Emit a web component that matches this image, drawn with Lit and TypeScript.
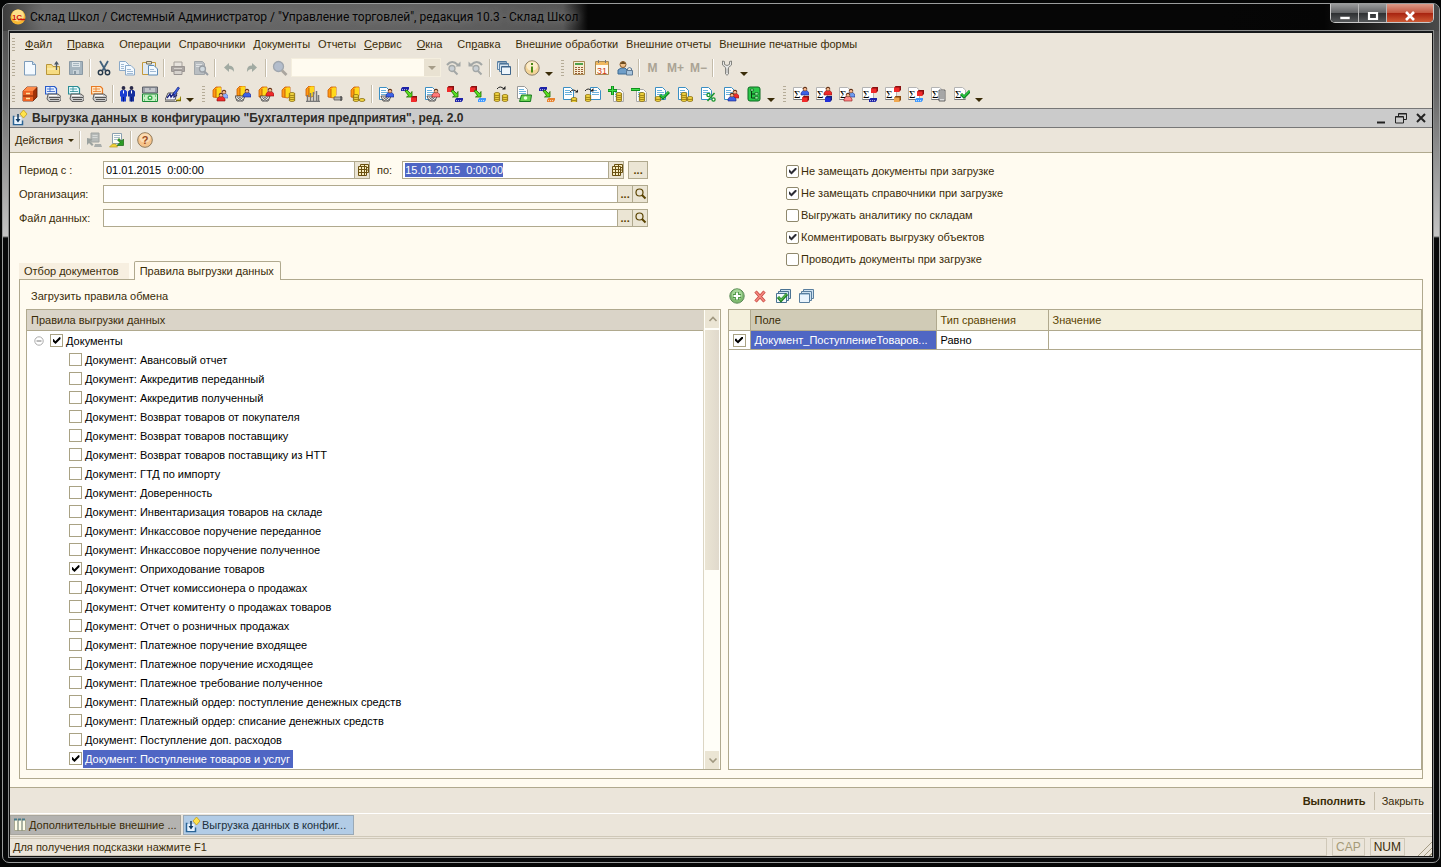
import { LitElement, html, svg, css, nothing } from "lit";
import { customElement, property, state } from "lit/decorators.js";
import { classMap } from "lit/directives/class-map.js";

/* ---------- building blocks shared by the toolbar icons ---------- */

const sheet = (x = 1, y = 1, line = "#3a8fc4") => svg`
  <path d="M${x + 0.5} ${y + 0.5}h7l3 3v9h-10z" fill="#fff" stroke=${line}/>
  <path d="M${x + 2} ${y + 3.5}h5M${x + 2} ${y + 5.5}h7M${x + 2} ${y + 7.5}h7" stroke="#6cb2dc"/>`;

const person = (x: number, y: number, color: string, dark: string) => svg`
  <path d="M${x} ${y + 8}v-2l2-2.500h4l2 2.500v2z" fill=${color} stroke=${dark} stroke-width=".6"/>
  <circle cx=${x + 4} cy=${y + 2} r="1.900" fill="#f6b68c" stroke="#6a3a20" stroke-width=".6"/>
  <path d="M${x + 2} ${y + 1.5}q2-2.500 4 0" stroke="#5a2c12" fill="none"/>`;

const coins = (x: number, y: number, n = 3) => svg`${Array.from({ length: n }, (_, i) => svg`
  <ellipse cx=${x + 3} cy=${y + 6 - i * 2} rx="3" ry="1.400" fill="#ffe34a" stroke="#7d6000" stroke-width=".8"/>`)}`;

const ledger = (x = 0, y = 1) => svg`
  <path d="M${x + 1} ${y + 10}V${y + 3}l3-3h5v8l-2 3z" fill="#ff9a14" stroke="#c85a00" stroke-width=".8"/>
  <path d="M${x + 4} ${y + 10}V${y + 2}l2-1.500h3v8l-2 2z" fill="#ffd91c"/>
  <path d="M${x + 4} ${y + 10}V${y + 2}" stroke="#b04c00" stroke-width=".8"/>`;

const basket = (x: number, y: number) => svg`
  <path d="M${x} ${y}h10l-2 5h-6z" fill="#e9e9e9" stroke="#333" stroke-width=".8"/>
  <path d="M${x + 2} ${y + 1}l5 4M${x + 5} ${y + 1}l3 3M${x + 8} ${y + 1}l-5 4M${x + 5} ${y + 1}l-3 3" stroke="#444" stroke-width=".6"/>`;

const box = (x: number, y: number, color: string, side: string) => svg`
  <path d="M${x} ${y + 2}l1.500-2h5.500v4l-1.500 1.500z" fill=${side}/>
  <path d="M${x} ${y + 1.5}h5.500v4.500h-5.500z" fill=${color}/>`;

const flat = (x: number, y: number, color: string) => svg`
  <path d="M${x} ${y + 1.5}l1.500-1.500h6.500v2l-1.500 2h-6.500z" fill=${color}/>
  <path d="M${x + 1} ${y + 2.7}h5" stroke="#fff" stroke-width=".8" stroke-dasharray="1 1"/>`;

const greenArrow = () => svg`
  <path d="M4 5l2-1 3.500 3.500 1.500-2v5.500h-5.500l2-1.500z" fill="#58e020" stroke="#1d6a00" stroke-width=".8"/>`;

const tick = (x: number, y: number) => svg`
  <path d="M${x} ${y + 3}l3 3 6-6" fill="none" stroke="#0c7a20" stroke-width="3"/>
  <path d="M${x + 0.4} ${y + 3}l2.600 2.500 5.500-5.500" fill="none" stroke="#28c840" stroke-width="1.400"/>`;

const sigma = () => svg`
  <path d="M.5 1.500h8l3 2.500v9.500h-11z" fill="#fff" stroke="#b4b4b4"/>
  <path d="M.5 13.500h11" stroke="#777"/>
  <text x="1" y="11.500" font-size="11" font-family="Liberation Serif, serif" fill="#000">Σ</text>`;

const printer = (line: string, fill: string) => svg`
  <path d="M.500 8V.500h9l2 2V8z" fill=${fill} stroke=${line} stroke-width="1.200"/>
  <path d="M2 3h7M2 5.500h8M5 1v5" stroke=${line} stroke-width=".8"/>
  <path d="M3 8h10l3 2.500v3.500l-2 1.500H4l-2-2.500z" fill="#c9c9c9" stroke="#444" stroke-width=".8"/>
  <path d="M4 11.500h11M5 13.500h9" stroke="#555"/>
  <path d="M4 9.500h8" stroke="#fff"/>`;

const curved = (x: number, y: number) => svg`
  <path d="M${x} ${y + 3}q3-4 7 0" fill="none" stroke="#222"/>
  <path d="M${x + 5} ${y + 3.5}h3.500v-3.500z" fill="#222"/>`;

const tower = (x: number, y: number) => svg`
  <path d="M${x} ${y + 12}V${y + 1}h6v11z" fill="#ddd" stroke="#444" stroke-width=".8"/>
  <path d="M${x + 1} ${y + 3}h4M${x + 1} ${y + 5}h4M${x + 1} ${y + 7}h4M${x + 1} ${y + 9}h4" stroke="#555" stroke-width=".8"/>`;

const BLUE = "#3b62e6", NAVY = "#16207c", RED = "#f02a2a", MAROON = "#8a0f0f", SKY = "#3c98ff";

const icons: Record<string, unknown> = {
  newDoc: svg`<path d="M2.500 1.500h8l3 3v10.500h-11z" fill="#f4faff" stroke="#7d9cba"/><path d="M10.500 1.500v3h3" fill="#cfe2f4" stroke="#7d9cba"/>`,
  open: svg`<path d="M1.500 14.500v-10h5l1.500 2h6.500v8z" fill="#f6dc82" stroke="#b9963a"/><path d="M2 9h12" stroke="#fdf3c4"/><path d="M11.500 10V2.500" stroke="#4a5866" stroke-width="1.300"/><path d="M9 4.500l2.500-3.500 2.500 3.500z" fill="#4a5866"/>`,
  save: svg`<path d="M1.500 1.500h13v13h-13z" fill="#a6b5bf" stroke="#8a99a4"/><path d="M4 2h8v5H4z" fill="#dde4e8"/><path d="M5 3.500h6M5 5.500h6" stroke="#a6b5bf"/><path d="M5 10h6v4H5z" fill="#c8d2d8"/><path d="M6 11h2v3H6z" fill="#8a99a4"/>`,
  cut: svg`<path d="M4 1l5.500 9.500M12 1L6.500 10.500" stroke="#42617c" stroke-width="1.800"/><circle cx="4.500" cy="12.500" r="2.200" fill="none" stroke="#26394a" stroke-width="1.400"/><circle cx="11.500" cy="12.500" r="2.200" fill="none" stroke="#26394a" stroke-width="1.400"/>`,
  copy: svg`<path d="M.500 1.500h6l3 3v6h-9z" fill="#f4faff" stroke="#8aa9c8"/><path d="M6.500 5.500h5.500l3.500 3.500v6h-9z" fill="#f4faff" stroke="#8aa9c8"/><path d="M8 9.500h4M8 11.500h6M8 13.500h6M2 4.500h3M2 6.500h3M2 8.500h3" stroke="#9fb9d4"/>`,
  paste: svg`<path d="M.500 2.500h13v12h-13z" fill="#dfe9f2" stroke="#c49a3c"/><path d="M4.500 1.500h5v2.500h-5z" fill="#e9e0c0" stroke="#77705a"/><path d="M6.500 5.500h5.500l3.500 3.500v6h-9z" fill="#f4faff" stroke="#5d8cb8"/><path d="M8 9.500h4M8 11.500h6" stroke="#9fb9d4"/>`,
  print: svg`<path d="M4 6V2h8v4" fill="#e7e3dd" stroke="#a5a09a"/><path d="M1.500 6.500h13v5h-13z" fill="#aaa5a2" stroke="#9a9592"/><path d="M4 10.500h8v4H4z" fill="#d6d2cd" stroke="#9a9592"/><path d="M4 8.500h8" stroke="#d6d2cd"/>`,
  preview: svg`<path d="M1.500 1.500h8l2 2v11h-10z" fill="#b9bec2" stroke="#a2a7aa"/><path d="M3 4.500h6M3 6.500h5" stroke="#dfe2e4"/><circle cx="9.500" cy="9" r="3" fill="#cfd8de" stroke="#989ea4" stroke-width="1.300"/><path d="M11.500 11.500l3.500 3.500" stroke="#989ea4" stroke-width="2"/>`,
  undo: svg`<path d="M3 7.500l5-4.500v2.500q5.500 0 5 6.500q-1.500-3-5-3v3z" fill="#a1aaa2"/>`,
  redo: svg`<path d="M13 7.500l-5-4.500v2.500q-5.500 0-5 6.500q1.500-3 5-3v3z" fill="#a1aaa2"/>`,
  find: svg`<circle cx="6.500" cy="6.500" r="5" fill="#b3bdcc" stroke="#9fa6ae" stroke-width="1.300"/><path d="M10 10.500l4.500 4.500" stroke="#aaa69f" stroke-width="2.800"/>`,
  findNext: svg`<path d="M2 5q5-6 11 0" fill="none" stroke="#a3a7a6" stroke-width="2"/><path d="M10.500 6.500h5v-5z" fill="#a3a7a6"/><circle cx="7" cy="8.500" r="3" fill="#c9cfd4" stroke="#a3a7a6" stroke-width="1.300"/><path d="M9 11l3.500 3.500" stroke="#a3a7a6" stroke-width="2"/>`,
  findPrev: svg`<path d="M14 5q-5-6-11 0" fill="none" stroke="#a3a7a6" stroke-width="2"/><path d="M5.500 6.500h-5v-5z" fill="#a3a7a6"/><circle cx="8" cy="8.500" r="3" fill="#c9cfd4" stroke="#a3a7a6" stroke-width="1.300"/><path d="M10 11l3.500 3.500" stroke="#a3a7a6" stroke-width="2"/>`,
  windows: svg`<path d="M1.500 1.500h9v8h-9z" fill="#dbe8f3" stroke="#5f85a8"/><path d="M3.500 3.500h9v8h-9z" fill="#dbe8f3" stroke="#5f85a8"/><path d="M5.500 6.500h9v8h-9z" fill="#eef5fb" stroke="#3f658a"/><path d="M2 2h8M4 4h8M6 7h8" stroke="#3f658a"/>`,
  info: svg`<circle cx="8" cy="8" r="7.200" fill="#f3d498" stroke="#8d8068"/><ellipse cx="8" cy="6" rx="5.500" ry="4.500" fill="#fbeccb"/><path d="M7 3h2v2H7zM7 6.500h2v6H7z" fill="#4a8a16"/>`,
  calc: svg`<path d="M2.500 1.500h11v13h-11z" fill="#f6ecd2" stroke="#a88a54"/><path d="M4 3h8v2H4z" fill="#4fa04a"/><path d="M4 7.500h8M4 9.500h8M4 11.500h8M4 13.500h8" stroke="#9a5c34" stroke-dasharray="2 1"/>`,
  calendar: svg`<path d="M1.500 1.500h13v13h-13z" fill="#fffaf0" stroke="#a88a54"/><path d="M2 2h12v3H2z" fill="#f0b860"/><path d="M4.500 0v3M11.500 0v3" stroke="#777"/><text x="8" y="13.500" text-anchor="middle" font-size="9" font-family="Liberation Sans, sans-serif" fill="#d03a10">31</text>`,
  userLock: svg`<path d="M1 14v-4l3-2h4l2 2v4z" fill="#6f9ec8" stroke="#3d6a92"/><circle cx="6" cy="4.500" r="3" fill="#f0c088" stroke="#8a5c2c"/><path d="M3 4q3-5 6 0" fill="#6b4a1c"/><path d="M9.500 10.500h6v4.500h-6z" fill="#a8c4dc" stroke="#5b7894"/><path d="M10.500 10V8.500q2-2 4 0V10" fill="none" stroke="#5b7894"/>`,
  wrench: svg`<path d="M3.500 1v4l3 2.500V14q1.500 2.500 3 0V7.500l3-2.500V1l-2 .500v3l-2.500 1-2.500-1v-3z" fill="#e6e6e4" stroke="#84847f"/><path d="M8 8.500v4.500" stroke="#aaa"/>`,

  cabinet: svg`<path d="M1 5l4-4h10v10l-4 4H1z" fill="#a23208" stroke="#5c1800" stroke-width=".8"/><path d="M1 5h10v10H1z" fill="#ec6224"/><path d="M1 5l4-4h10l-4 4z" fill="#ff8c4a"/><path d="M1 10h10" stroke="#7a2200"/><path d="M4 7.500h4M4 12.500h4" stroke="#ffe3a0" stroke-width="1.500"/>`,
  printBlue: printer("#2a5cc8", "#e8f2ff"),
  printTeal: printer("#2a8c94", "#eafcff"),
  printOrange: printer("#e87a24", "#ffe9c8"),
  people: svg`<path d="M1 5.500l1.500-1.500h4l1.500 1.500v5H7v5H2v-5H1z" fill="#1c3fd2"/><path d="M9 5.500l1.500-1.500h4l1.500 1.500v5h-1v5h-4.500v-5H9z" fill="#16309e"/><circle cx="4.500" cy="2" r="1.900" fill="#2b2b4a"/><circle cx="12.500" cy="2" r="1.900" fill="#2b2b4a"/><path d="M4.500 4.500v3M12.500 4.500v3" stroke="#fff"/><path d="M4.500 11v4.500M12.500 11v4.500" stroke="#0a1a70"/>`,
  cash: svg`<path d="M.500 1h15v6H.500z" fill="#9a9ea6" stroke="#5d6068"/><path d="M3 3h4M9 3h4M3 5h10" stroke="#e9e9e9"/><path d="M.500 8h15v7.500H.500z" fill="#c8f0c4" stroke="#188a34"/><circle cx="8" cy="11.700" r="2.500" fill="#38b04c"/><path d="M7 11h2v1.500H7z" fill="#e8ffe8"/><path d="M2 10h1M13 10h1M2 14h1M13 14h1" stroke="#188a34"/>`,
  sign: svg`<path d="M0 14l3-7h9l-2 7z" fill="#f4f4ff" stroke="#555"/><path d="M2 12l3-4 1 3 3-4 0 4 3-2" fill="none" stroke="#16207c" stroke-width="1.300"/><path d="M8 8l5-7 1.500 1L10 9z" fill="#3b62e6" stroke="#16207c" stroke-width=".7"/><path d="M11 14.500h4.500l.500-4" fill="#ffe34a" stroke="#7d7000" stroke-width="1.300"/><path d="M0 15.500h12" stroke="#777"/>`,

  ledgerRed: svg`${ledger()}${person(8, 4, "#8fb0ff", "#3a5ab0")}${person(5, 7, RED, MAROON)}`,
  ledgerBasketBlue: svg`${ledger(1, 0)}${basket(0, 10)}${person(8, 3, BLUE, NAVY)}`,
  ledgerBasketRed: svg`${ledger()}${basket(2, 10)}${person(8, 2, RED, MAROON)}`,
  ledgerCoins: svg`${ledger()}${coins(8, 8, 4)}`,
  ledgerChart: svg`${ledger(1, 0)}<path d="M3.500 15V9M6.500 15V7M9.500 15V6M12.500 15V5M2 15.500h14M14.500 15V9" stroke="#777" stroke-width="1.500"/>`,
  ledgerKey: svg`${ledger()}<path d="M7 11h8v3H7z" fill="#b4b4b4" stroke="#555" stroke-width=".8"/><path d="M14 10v5" stroke="#333"/>`,
  ledgerSpread: svg`${ledger()}${coins(3, 8, 3)}${coins(9, 8, 1)}`,

  docBasketBlue: svg`${sheet()}${basket(3, 10)}${person(8, 3, BLUE, NAVY)}`,
  moveNavyRed: svg`${flat(0, 1, "#1d22a8")}${greenArrow()}${box(10, 10, RED, MAROON)}`,
  docBasketRed: svg`${sheet()}${basket(3, 10)}${person(8, 3, "#ff7a7a", MAROON)}`,
  moveRedNavy: svg`${box(0, 0, RED, MAROON)}${greenArrow()}${flat(8, 12, "#1d22a8")}`,
  moveRedSky: svg`${box(0, 0, RED, MAROON)}${greenArrow()}${flat(8, 12, SKY)}`,
  coinsTurn: svg`${curved(4, 0)}${coins(1, 8, 4)}${coins(9, 8, 3)}`,
  docCash: svg`${sheet(1, 0, "#999")}<path d="M3.500 15.500l2-6.500h10l-1 6.500z" fill="#68d050" stroke="#157a1c"/><circle cx="9.500" cy="12" r="1.800" fill="#eaffdc"/>`,
  moveNavyOrange: svg`${flat(0, 1, "#1d22a8")}${greenArrow()}${flat(8, 12, "#e8822c")}`,
  docArrowCoins: svg`${sheet()}${curved(8, 3)}${coins(9, 9, 2)}`,
  arrowDocCoins: svg`${sheet(5, 1)}${curved(0, 2)}${coins(0, 8, 3)}`,
  plusCoins: svg`${sheet(5, 3, "#aaa")}<path d="M4.500 0v9M0 4.500h9" stroke="#11901c" stroke-width="3"/><path d="M4.500 .500v8M.500 4.500h8" stroke="#3ee04a"/>${coins(8, 8, 4)}`,
  minusCoins: svg`${sheet(5, 3, "#aaa")}<path d="M0 3.500h9" stroke="#11901c" stroke-width="3"/><path d="M.500 3.500h8" stroke="#3ee04a"/>${coins(8, 8, 4)}`,
  docCheckCoins: svg`${sheet()}${coins(1, 8, 2)}${tick(6, 6)}`,
  docCoins: svg`${sheet()}${coins(4, 8, 4)}${coins(10, 8, 2)}`,
  docPercent: svg`${sheet()}<path d="M14.500 7l-7 8" stroke="#17952a" stroke-width="1.500"/><circle cx="8.500" cy="9" r="1.600" fill="#fff" stroke="#17952a" stroke-width="1.300"/><circle cx="13.500" cy="13.500" r="1.600" fill="#fff" stroke="#17952a" stroke-width="1.300"/>`,
  docPeople: svg`${sheet()}${person(8, 4, RED, MAROON)}${person(5, 7, BLUE, NAVY)}`,
  treeGreen: svg`<rect x="2" y="1" width="12" height="14" rx="2" fill="#2cc84a" stroke="#0c6a20"/><path d="M5.500 4v8h4M5.500 8h4" fill="none" stroke="#083a10"/><path d="M9 6.500h3v2.500H9zM9 10.500h3V13H9zM4.500 3h3v2h-3z" fill="#8af09a" stroke="#083a10" stroke-width=".5"/>`,

  sumBlueRed: svg`${sigma()}${box(9, 10, RED, MAROON)}${person(8, 1, BLUE, NAVY)}`,
  sumRedBlue: svg`${sigma()}${box(9, 10, "#2430d8", NAVY)}${person(8, 1, RED, MAROON)}`,
  sumPeople: svg`${sigma()}${person(8, 3, "#6f9cf0", NAVY)}${person(5, 7, "#ff8a8a", MAROON)}`,
  sumRedNavy: svg`${sigma()}${box(9, 1, RED, MAROON)}${flat(7, 12, "#1d22a8")}`,
  sumRedBrown: svg`${sigma()}${box(9, 0, RED, MAROON)}${box(9, 10, "#f0a850", "#8a4a10")}`,
  sumRedSky: svg`${sigma()}${box(9, 4, RED, MAROON)}${flat(7, 12, SKY)}`,
  sumTower: svg`${sigma()}${tower(8, 3)}`,
  sumCheck: svg`${sigma()}${tick(7, 5)}`,

  exportOff: svg`<path d="M5 1h8v9H5z" fill="#b6bab8" stroke="#a0a4a2"/><path d="M6.500 3.500h5M6.500 5.500h5" stroke="#d6d9d7"/><path d="M1 6v7l2-2 3 3 1.500-1.500-3-3L6.500 7z" fill="#9ca29f"/><path d="M9 12h6l1 3H8z" fill="#a9adab"/>`,
  importOn: svg`<path d="M3.500 1.500h9v10h-9z" fill="#fdfdf6" stroke="#8aa0b0"/><path d="M5 3.500h6M5 5.500h6M5 7.500h3" stroke="#a8bccc"/><path d="M8 13.500h6.500v-6.500l-2 2-2.500-2.500-1.500 1.500 2.500 2.500z" fill="#2c9c24" stroke="#166410" stroke-width=".7"/><path d="M.500 15l3-3h3l2 3z" fill="#f2d43c" stroke="#b89a1c" stroke-width=".7"/>`,
  help: svg`<circle cx="8" cy="8" r="7.300" fill="#f6c48c" stroke="#8f7a5a"/><ellipse cx="8" cy="6" rx="5.500" ry="4.500" fill="#fbdcb4"/><text x="8" y="12" text-anchor="middle" font-size="11" font-weight="bold" font-family="Liberation Sans, sans-serif" fill="#9a4a1c">?</text>`,
  process: svg`<path d="M2.500 6.500h-1v8h9v-4" fill="none" stroke="#2a6496" stroke-width="1.500"/><path d="M2.500 7h7v7h-7z" fill="#e8f4ff"/><path d="M6 4v7" stroke="#123c64" stroke-width="1.500"/><path d="M3.500 9h5L6 12.500z" fill="#123c64"/><path d="M11.500 0l3.500 4-3.500 4-3.500-4z" fill="#ffe34a" stroke="#c49a1c" stroke-width=".8"/>`,
  columns: svg`<path d="M2.500 2.500h11v11h-11z" fill="#fffde8" stroke="#a9a890"/><path d="M2 2.500h12" stroke="#4a7a8a" stroke-width="2" stroke-dasharray="3 1"/><path d="M6 3v10.500M10 3v10.500" stroke="#5a6a60"/>`,
  addRound: svg`<circle cx="8" cy="8" r="7.200" fill="#7fba70" stroke="#5c8a58"/><circle cx="8" cy="6.500" r="5.200" fill="#a5d698"/><path d="M8 4v8M4 8h8" stroke="#4a9440" stroke-width="4"/><path d="M8 4.500v7M4.500 8h7" stroke="#fff" stroke-width="2.200"/>`,
  remove: svg`<path d="M3.500 3.500l9 10M12.500 3.500l-9 10" stroke="#c84a44" stroke-width="3.200"/><path d="M3.700 3.700l8.600 9.600M12.300 3.700l-8.600 9.600" stroke="#f48a80" stroke-width="1.500"/>`,
  checkAll: svg`<path d="M5.500 1.500h10v9h-10z" fill="#cfe2f0" stroke="#4a7292"/><path d="M3.500 3.500h10v9h-10z" fill="#cfe2f0" stroke="#4a7292"/><path d="M1.500 5.500h10v9h-10z" fill="#f4faff" stroke="#4a7292"/><path d="M3 9l3 3.500 6-6.500" fill="none" stroke="#1c7a20" stroke-width="3"/><path d="M3.400 9.200l2.600 2.800 5.500-6" fill="none" stroke="#58b850" stroke-width="1.200"/>`,
  uncheckAll: svg`<path d="M5.500 1.500h10v9h-10z" fill="#cfe2f0" stroke="#5a7f9e"/><path d="M3.500 3.500h10v9h-10z" fill="#cfe2f0" stroke="#5a7f9e"/><path d="M1.500 5.500h10v9h-10z" fill="#eaf4fc" stroke="#5a7f9e"/><path d="M2 6.500h9" stroke="#a9c6dc"/>`,
  pick: svg`<path d="M5.500 2.500h8v8h-8z" fill="#f6ecc0" stroke="#6a5010"/><path d="M3.500 4.500h8v9h-8z" fill="#f6ecc0" stroke="#6a5010"/><path d="M4 7.500h7.500M4 10.500h7.500M6.500 5v9M9.500 3v11M12 5.500h2M12 8h2" stroke="#6a5010"/>`,
  lens: svg`<circle cx="6.500" cy="6.500" r="3.500" fill="none" stroke="#5a4300" stroke-width="1.200"/><path d="M9 9l3.500 3.500" stroke="#5a4300" stroke-width="2"/>`,
  up: svg`<path d="M4.500 10L8 6.500l3.500 3.500" fill="none" stroke="#a09880" stroke-width="1.600"/>`,
  down: svg`<path d="M4.500 6.500L8 10l3.500-3.500" fill="none" stroke="#a09880" stroke-width="1.600"/>`,
  logo: svg`<circle cx="8" cy="8" r="7.500" fill="#f7b733"/><circle cx="8" cy="6.500" r="6" fill="#fde08a"/><text x="7" y="11" text-anchor="middle" font-size="8" font-weight="bold" font-family="Liberation Sans, sans-serif" fill="#d0140c">1С</text><path d="M8 10.500h7" stroke="#d0140c" stroke-width="1.300"/>`,
};

const glyph = (name: string) => html`<svg width="16" height="16" viewBox="0 0 16 16" aria-hidden="true">${icons[name]}</svg>`;

const shared = css`
  * { box-sizing: border-box; }
  button, input, select { font: inherit; color: inherit; margin: 0; padding: 0; }
  button { border: 0; background: none; }
  svg { display: block; flex: none; }
`;

/* ---------- a strip of icon buttons ---------- */

@customElement("tool-strip")
class ToolStrip extends LitElement {
  /** Space-separated icon names; "|" is a divider, "v" the overflow arrow. */
  @property() items = "";
  @property({ type: Boolean }) grip = false;

  static styles = [shared, css`
    :host { display: flex; align-items: center; }
    .grip { width: 3px; height: 16px; margin: 0 3px 0 2px; background: repeating-linear-gradient(#b5ac98 0 1px, transparent 1px 3px); }
    .tool { width: 23px; height: 22px; display: grid; place-items: center; }
    .memory { font-size: 12px; font-weight: bold; color: #aaa394; }
    .divider { width: 1px; height: 18px; margin: 0 2px; background: #c4bcaa; box-shadow: 1px 0 #fff; }
    .more { width: 16px; height: 22px; display: flex; align-items: flex-end; justify-content: center; padding: 0 4px 3px 0; }
    .more::after { content: ""; border: 4px solid transparent; border-top-color: #3a2c08; border-bottom: 0; }
  `];

  render() {
    return html`${this.grip ? html`<span class="grip"></span>` : nothing}${this.items.split(" ").map((name) =>
      name === "|" ? html`<span class="divider"></span>`
      : name === "v" ? html`<button class="more" aria-label="Ещё"></button>`
      : name.startsWith("M") ? html`<button class="tool memory">${name}</button>`
      : html`<button class="tool" aria-label=${name}>${glyph(name)}</button>`)}`;
  }
}

/* ---------- data ---------- */

interface MenuItem { text: string; key?: number }
const menu: MenuItem[] = [
  { text: "Файл", key: 0 }, { text: "Правка", key: 0 }, { text: "Операции" }, { text: "Справочники" },
  { text: "Документы" }, { text: "Отчеты" }, { text: "Сервис", key: 0 }, { text: "Окна", key: 0 },
  { text: "Справка", key: 2 }, { text: "Внешние обработки" }, { text: "Внешние отчеты" }, { text: "Внешние печатные формы" },
];

const options: [string, boolean][] = [
  ["Не замещать документы при загрузке", true],
  ["Не замещать справочники при загрузке", true],
  ["Выгружать аналитику по складам", false],
  ["Комментировать выгрузку объектов", true],
  ["Проводить документы при загрузке", false],
];

const rules: [string, boolean][] = [
  ["Авансовый отчет", false], ["Аккредитив переданный", false], ["Аккредитив полученный", false],
  ["Возврат товаров от покупателя", false], ["Возврат товаров поставщику", false],
  ["Возврат товаров поставщику из НТТ", false], ["ГТД по импорту", false], ["Доверенность", false],
  ["Инвентаризация товаров на складе", false], ["Инкассовое поручение переданное", false],
  ["Инкассовое поручение полученное", false], ["Оприходование товаров", true],
  ["Отчет комиссионера о продажах", false], ["Отчет комитенту о продажах товаров", false],
  ["Отчет о розничных продажах", false], ["Платежное поручение входящее", false],
  ["Платежное поручение исходящее", false], ["Платежное требование полученное", false],
  ["Платежный ордер: поступление денежных средств", false], ["Платежный ордер: списание денежных средств", false],
  ["Поступление доп. расходов", false], ["Поступление товаров и услуг", true],
];

/* ---------- application window ---------- */

@customElement("app-root")
class AppRoot extends LitElement {
  @state() private selected = rules.length - 1;

  static styles = [shared, css`
    :host {
      display: flex; height: 100vh; padding: 3px 1px 4px 2px; background: #050606; overflow: hidden;
      box-sizing: border-box; font: 11px/14px "Liberation Sans", Arial, sans-serif; color: #3a2c08;
    }
    .frame {
      flex: 1; min-width: 0; display: flex; flex-direction: column; padding: 0 6px 5px;
      border: 1px solid #9a9c9c; border-radius: 7px;
      background: linear-gradient(#444 0, #6a6a6a 90px, #c4c4c4 232px, #08090a 234px, #08090a);
    }
    .caption {
      flex: none; height: 27px; display: flex; align-items: flex-start; margin: 0 -6px; padding-left: 7px;
      border-radius: 6px 6px 0 0; overflow: hidden;
      background: linear-gradient(90deg, #3c3c3c 0, #6b6b6b 40px, #626262 420px, #565656 560px, #060606 585px, #060606 85%, #050505 92%, #4a4a4a 100%);
    }
    .caption svg { margin-top: 5px; }
    .title { margin: 0 0 0 4px; font: 12px/26px Roboto, sans-serif; color: #050505; flex: 1; white-space: nowrap; text-shadow: 0 0 8px #999; }
    .window-buttons { display: flex; margin-right: 5px; border: 1px solid #c9c9c9; border-top: 0; border-radius: 0 0 5px 5px; overflow: hidden; }
    .window-buttons button { width: 28px; height: 18px; display: grid; place-items: center; background: linear-gradient(#9a9b9c, #606264 50%, #2e3032 52%, #55585a); border-right: 1px solid #b9b9b9; }
    .window-buttons .close { width: 46px; border: 0; background: linear-gradient(#dd9a88, #c4563e 50%, #a82410 52%, #cf5a34); }

    .body { flex: 1; min-height: 0; display: flex; flex-direction: column; background: #ebe5da; border: 1px solid #111; border-top: 2px solid #15181a; outline: 1px solid #8b8d8d; }
    .menu { height: 22px; flex: none; display: flex; align-items: center; gap: 8px; padding-left: 2px; }
    .menu a { color: inherit; text-decoration: none; white-space: nowrap; }
    .menu .hot { padding-right: 7px; }
    .menu .grip { width: 3px; height: 13px; margin-right: 2px; background: repeating-linear-gradient(#b5ac98 0 1px, transparent 1px 3px); }
    .tools { display: flex; align-items: center; flex: none; height: 25px; }
    .tools.second { height: 28px; }
    .search { display: flex; width: 150px; height: 19px; background: #fffbf0; border: 1px solid #f4eede; }
    .search input { flex: 1; min-width: 0; border: 0; background: none; outline: 0; }
    .search button { width: 16px; background: #e9e2d2; display: grid; place-items: center; }
    .search button::after { content: ""; border: 4px solid transparent; border-top-color: #a59c88; border-bottom: 0; }

    .child-title { height: 20px; flex: none; display: flex; align-items: center; padding: 0 1px 0 2px; background: #cbcbcb; border: solid #777; border-width: 1px 0; }
    .child-title h1 { flex: 1; margin: 0 0 0 4px; font-size: 12px; line-height: 18px; color: #2c2a26; }
    .child-title button { width: 20px; height: 18px; display: grid; place-items: center; }
    .actions { height: 25px; flex: none; display: flex; align-items: center; padding-left: 5px; border-bottom: 1px solid #b0a98e; }
    .drop { display: flex; align-items: center; gap: 5px; margin-right: 3px; }
    .drop::after { content: ""; border: 3px solid transparent; border-top-color: #3a2c08; border-bottom: 0; }

    .form { flex: 1; min-height: 0; display: flex; flex-direction: column; padding: 8px 9px; background: #fffbf0; border-bottom: 1px solid #b0a98e; }
    .head { flex: none; display: grid; grid-template-columns: 767px 1fr; grid-template-rows: auto 1fr; }
    .fields { width: 629px; display: grid; grid-template-columns: 84px 1fr; row-gap: 6px; align-items: center; }
    .period { display: flex; align-items: center; }
    .period .from { width: 267px; }
    .period .to { width: 222px; margin: 0 4px 0 10px; }
    .period .caption-to { margin-left: 7px; flex: 1; }
    .entry { display: flex; height: 18px; background: #fff; border: 1px solid #b0a98e; }
    .entry input { flex: 1; min-width: 0; border: 0; outline: 0; background: none; padding: 0 2px; color: #000; white-space: pre; caret-color: transparent; }
    .entry input::selection { background: #4f66c4; color: #fff; }
    .square { width: 15px; height: 16px; display: grid; place-items: center; background: #ebe5d4; border-left: 1px solid #b0a98e; color: #5a4300; font-weight: bold; overflow: hidden; }
    .more { width: 20px; height: 18px; background: #ebe5d4; border: 1px solid #b0a98e; font-weight: bold; color: #5a4300; }
    .checks { grid-column: 2; grid-row: 1 / 3; display: flex; flex-direction: column; gap: 8px; padding: 3px 0 14px; }
    .checks label { display: flex; align-items: center; gap: 2px; }

    input[type="checkbox"] { appearance: none; flex: none; width: 13px; height: 13px; background: #fff; border: 1px solid #a9a284; display: grid; place-items: center; }
    .checks input[type="checkbox"] { border-radius: 2px; border-color: #8f886c; }
    input[type="checkbox"]:checked::after { content: ""; width: 8px; height: 7px; background: #000; clip-path: polygon(0 35%, 15% 30%, 35% 60%, 88% 0, 100% 8%, 100% 30%, 38% 100%, 0 62%); }
    .checks input[type="checkbox"]:checked::after { background: #2c2c34; }

    .tabs { display: flex; align-items: flex-end; gap: 5px; align-self: end; }
    .tabs button { height: 17px; padding: 0 10px 0 5px; background: #f7efe0; line-height: 17px; }
    .tabs .active { position: relative; z-index: 1; height: 19px; padding: 0 6px 0 5px; background: #fffbf0; border: 1px solid #b0a98e; border-bottom: 0; border-radius: 2px 2px 0 0; }
    .panel { flex: 1; min-height: 0; margin-top: -1px; display: grid; grid-template-columns: 1fr 1fr; grid-template-rows: 29px 1fr; column-gap: 7px; padding: 0 0 8px 6px; border: 1px solid #b0a98e; }
    .load { justify-self: start; align-self: center; padding: 3px 0 0 5px; }
    .row-tools { display: flex; align-items: center; padding-top: 2px; }
    .row-tools tool-strip { margin-left: -2px; }

    .tree { min-height: 0; display: flex; background: #fff; border: 1px solid #b0a98e; }
    .tree-main { flex: 1; min-width: 0; display: flex; flex-direction: column; }
    .tree-head { flex: none; height: 21px; line-height: 20px; padding-left: 4px; background: #dad4c8; border-bottom: 1px solid #b0a98e; }
    .rows { flex: 1; min-height: 0; overflow: hidden; margin: 0; padding: 0; list-style: none; color: #000; }
    .rows li { height: 19px; display: flex; align-items: center; padding-left: 42px; }
    .rows .root { padding-left: 7px; }
    .rows label { padding: 0 3px 0 2px; margin-left: 1px; line-height: 18px; white-space: nowrap; }
    .rows .selected label { background: #4f66c4; color: #fff; }
    .toggle { margin-right: 6px; width: 10px; }
    .scroll { width: 17px; display: flex; flex-direction: column; border-left: 1px solid #dcd6c4; padding: 0 1px; background: #fffef8; }
    .scroll button { height: 18px; background: #ebe5d4; display: grid; place-items: center; overflow: hidden; }
    .track { flex: 1; padding-top: 2px; }
    .thumb { height: 57%; background: linear-gradient(90deg, #ebe5d4, #e0d9cc); }

    .list { min-width: 0; background: #fff; border: 1px solid #b0a98e; overflow: hidden; }
    table { width: 100%; table-layout: fixed; border-collapse: separate; border-spacing: 0; color: #000; }
    th, td { padding: 0 4px; font-weight: normal; text-align: left; border: solid #b0a98e; border-width: 0 1px 1px 0; white-space: nowrap; overflow: hidden; text-overflow: ellipsis; }
    th:last-child, td:last-child { border-right: 0; }
    th { height: 21px; background: #f4f0dc; color: #5a4300; }
    td { height: 19px; }
    .col-check { width: 22px; }
    .col-field { width: 186px; }
    .col-kind { width: 112px; }
    .sorted { background: #d0cbb6; color: #3a2c08; }
    .current { background: #4f66c4; color: #fff; }

    .footer { height: 26px; flex: none; display: flex; align-items: center; justify-content: flex-end; padding-right: 8px; border-bottom: 1px solid #fff; }
    .footer .run { font-weight: bold; padding-right: 8px; }
    .footer .quit { padding-left: 7px; line-height: 18px; border-left: 1px solid #c4bcaa; }
    .windows { height: 22px; flex: none; display: flex; align-items: center; gap: 2px; }
    .windows button { width: 171px; height: 20px; display: flex; align-items: center; gap: 1px; padding: 0 1px; background: #b4b3b0; border: 1px solid #a8a69e; white-space: nowrap; }
    .windows .active { background: #b2cce6; border-color: #9aa9b6; color: #20303c; }
    .status { height: 20px; flex: none; display: flex; align-items: center; gap: 5px; border-top: 1px solid #cfc8b8; }
    .status span { height: 18px; line-height: 16px; padding: 0 3px; border: 1px solid #cfc8b8; font-size: 12px; }
    .status .hint { flex: 1; padding: 0 3px; border-left: 0; font-size: 11px; }
    .status .off { color: #a59a78; }
    .corner { width: 15px; height: 15px; margin-left: 7px; align-self: flex-end; background: repeating-linear-gradient(135deg, transparent 0 3px, #a59c84 3px 4px); clip-path: polygon(100% 0, 100% 100%, 0 100%); }
  `];

  firstUpdated() {
    const field = this.renderRoot.querySelector<HTMLInputElement>("#date-to");
    field?.focus();
    field?.select();
  }

  private menuText({ text, key }: MenuItem) {
    return key === undefined ? text : html`${text.slice(0, key)}<u>${text[key]}</u>${text.slice(key + 1)}`;
  }

  private entry(id: string, label: string) {
    return html`<label for=${id}>${label}</label>
      <div class="entry"><input id=${id} type="text"><button class="square" aria-label="Выбрать">...</button><button class="square" aria-label="Открыть">${glyph("lens")}</button></div>`;
  }

  render() {
    return html`
      <div class="frame">
        <header class="caption">
          ${glyph("logo")}
          <p class="title">Склад Школ / Системный Администратор / "Управление торговлей", редакция 10.3 - Склад Школ</p>
          <div class="window-buttons">
            <button aria-label="Свернуть"><svg width="12" height="10" viewBox="0 0 12 10"><path d="M1 5.500h10v3H1z" fill="#fff" stroke="#444" stroke-width=".6"/></svg></button>
            <button aria-label="Развернуть"><svg width="12" height="10" viewBox="0 0 12 10"><path d="M2 2h8v6h-8z" fill="none" stroke="#fff" stroke-width="2.200"/></svg></button>
            <button class="close" aria-label="Закрыть окно"><svg width="12" height="10" viewBox="0 0 12 10"><path d="M2 1l8 8M10 1L2 9" stroke="#fff" stroke-width="2.600"/></svg></button>
          </div>
        </header>
        <div class="body">
          <nav class="menu"><span class="grip"></span>
            ${menu.map((m) => html`<a href="#" class=${classMap({ hot: m.key !== undefined })}>${this.menuText(m)}</a>`)}
          </nav>
          <div class="tools">
            <tool-strip grip items="newDoc open save | cut copy paste | print preview | undo redo | find"></tool-strip>
            <div class="search"><input type="text" aria-label="Поиск"><button aria-label="История поиска"></button></div>
            <tool-strip items="findNext findPrev | windows | info v"></tool-strip>
            <tool-strip grip items="calc calendar userLock | M M+ M− | wrench v"></tool-strip>
          </div>
          <div class="tools second">
            <tool-strip grip items="cabinet printBlue printTeal printOrange | people cash sign v"></tool-strip>
            <tool-strip grip items="ledgerRed ledgerBasketBlue ledgerBasketRed ledgerCoins ledgerChart ledgerKey ledgerSpread | docBasketBlue moveNavyRed docBasketRed moveRedNavy moveRedSky coinsTurn docCash moveNavyOrange docArrowCoins arrowDocCoins plusCoins minusCoins docCheckCoins docCoins docPercent docPeople treeGreen v"></tool-strip>
            <tool-strip grip items="sumBlueRed sumRedBlue sumPeople sumRedNavy sumRedBrown sumRedSky sumTower sumCheck v"></tool-strip>
          </div>
          <div class="child-title">
            ${glyph("process")}
            <h1>Выгрузка данных в конфигурацию "Бухгалтерия предприятия", ред. 2.0</h1>
            <button aria-label="Свернуть"><svg width="12" height="12" viewBox="0 0 12 12"><path d="M2 10.500h8" stroke="#222" stroke-width="2"/></svg></button>
            <button aria-label="Восстановить"><svg width="12" height="12" viewBox="0 0 12 12"><path d="M3.500 4V1.500h8v6H9M3.500 2h8M.500 4.500h8v6.500h-8zM.500 5h8" fill="none" stroke="#222"/></svg></button>
            <button aria-label="Закрыть"><svg width="12" height="12" viewBox="0 0 12 12"><path d="M2 2l8 8M10 2l-8 8" stroke="#222" stroke-width="2"/></svg></button>
          </div>
          <div class="actions">
            <button class="drop">Действия</button>
            <tool-strip items="| exportOff importOn | help"></tool-strip>
          </div>
          <main class="form">
            <div class="head">
              <div class="fields">
                <label for="date-from">Период с :</label>
                <div class="period">
                  <div class="entry from"><input id="date-from" type="text" .value=${"01.01.2015  0:00:00"}><button class="square" aria-label="Календарь">${glyph("pick")}</button></div>
                  <label class="caption-to" for="date-to">по:</label>
                  <div class="entry to"><input id="date-to" type="text" .value=${"15.01.2015  0:00:00"}><button class="square" aria-label="Календарь">${glyph("pick")}</button></div>
                  <button class="more" aria-label="Выбрать период">...</button>
                </div>
                ${this.entry("org", "Организация:")}
                ${this.entry("file", "Файл данных:")}
              </div>
              <div class="checks">
                ${options.map(([text, on]) => html`<label><input type="checkbox" .checked=${on}>${text}</label>`)}
              </div>
              <div class="tabs">
                <button>Отбор документов</button>
                <button class="active">Правила выгрузки данных</button>
              </div>
            </div>
            <section class="panel">
              <button class="load">Загрузить правила обмена</button>
              <div class="row-tools"><tool-strip items="addRound remove checkAll uncheckAll"></tool-strip></div>
              <div class="tree">
                <div class="tree-main">
                  <div class="tree-head">Правила выгрузки данных</div>
                  <ul class="rows">
                    <li class="root">
                      <button class="toggle" aria-label="Свернуть группу"><svg width="10" height="10" viewBox="0 0 10 10"><circle cx="5" cy="5" r="4.200" fill="#fff" stroke="#aaa"/><path d="M2.500 5h5" stroke="#777"/></svg></button>
                      <input id="root" type="checkbox" checked><label for="root">Документы</label>
                    </li>
                    ${rules.map(([text, on], i) => html`
                      <li class=${classMap({ selected: i === this.selected })} @click=${() => (this.selected = i)}>
                        <input id="rule-${i}" type="checkbox" .checked=${on}><label for="rule-${i}">Документ: ${text}</label>
                      </li>`)}
                  </ul>
                </div>
                <div class="scroll">
                  <button aria-label="Вверх">${glyph("up")}</button>
                  <div class="track"><div class="thumb"></div></div>
                  <button aria-label="Вниз">${glyph("down")}</button>
                </div>
              </div>
              <div class="list">
                <table>
                  <thead><tr><th class="col-check"></th><th class="col-field sorted">Поле</th><th class="col-kind">Тип сравнения</th><th>Значение</th></tr></thead>
                  <tbody><tr><td><input type="checkbox" aria-label="Использовать" checked></td><td class="current">Документ_ПоступлениеТоваров...</td><td>Равно</td><td></td></tr></tbody>
                </table>
              </div>
            </section>
          </main>
          <div class="footer"><button class="run">Выполнить</button><button class="quit">Закрыть</button></div>
          <div class="windows">
            <button>${glyph("columns")}Дополнительные внешние ...</button>
            <button class="active">${glyph("process")}Выгрузка данных в конфиг...</button>
          </div>
          <footer class="status"><span class="hint">Для получения подсказки нажмите F1</span><span class="off">CAP</span><span>NUM</span><i class="corner"></i></footer>
        </div>
      </div>`;
  }
}
